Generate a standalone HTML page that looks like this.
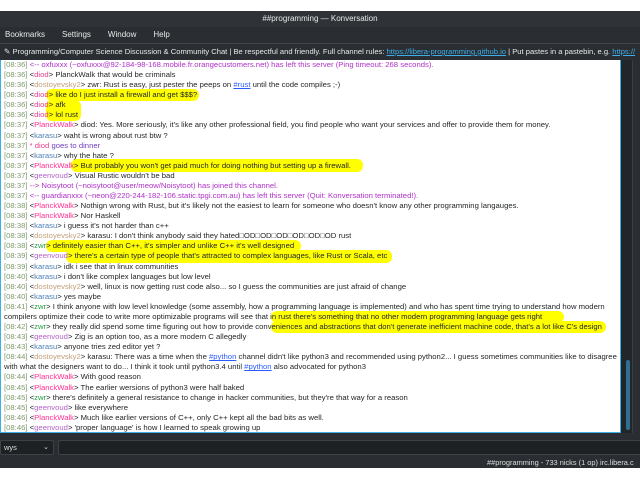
<!DOCTYPE html>
<html><head><meta charset="utf-8"><style>
*{margin:0;padding:0;box-sizing:border-box}
body{width:640px;height:480px;background:#fff;position:relative;overflow:hidden;font-family:"Liberation Sans","DejaVu Sans",sans-serif;}
.title{position:absolute;left:0;top:11px;width:640px;height:16px;background:#2f3337;color:#e8e8e8;font-size:8px;line-height:16px;text-align:center}
.menu{position:absolute;left:0;top:27px;width:640px;height:16px;background:#2a2e32;color:#e8e8e8;font-size:8px;line-height:16px;white-space:nowrap}
.menu span{margin-left:5px;margin-right:12px}
.topic{position:absolute;left:0;top:43px;width:640px;height:17px;background:#2a2e32;border-top:1px solid #41464b;color:#e8e8e8;font-size:7.6px;line-height:15px;white-space:nowrap;overflow:hidden;padding-left:4px}
.topic a{color:#3daee9;text-decoration:underline}
.chat{position:absolute;left:0;top:60px;width:621px;height:373px;background:#fff;border:1px solid #3daee9;border-top:none;overflow:hidden}
.lines{position:absolute;left:3px;top:0px;font-size:7.7px;color:#232629;white-space:nowrap;z-index:2}
.lines div{height:10.08px;line-height:10.08px}
.hl{position:absolute;background:#ffff00;border-radius:6px;z-index:1}
.t{color:#7f9a6f}.d{color:#e83c8c}.o{color:#c4a07a}.p{color:#ff2f92}.k{color:#4b7fb8}.g{color:#b463c8}.z{color:#26a245}.j{color:#b030c8}.l{color:#2b5cff;text-decoration:underline}
.sb{position:absolute;left:621px;top:60px;width:11px;height:373px;background:#232629}
.thumb{position:absolute;left:626px;top:360px;width:4px;height:70px;background:#2f6f94;border-radius:2px}
.rp{position:absolute;left:632px;top:60px;width:8px;height:373px;background:#2a2e32;border-left:1px solid #3a3f44}
.bottom{position:absolute;left:0;top:433px;width:640px;height:35px;background:#2a2e32}
.combo{position:absolute;left:0;top:440px;width:54px;height:15px;background:#1e2124;border:1px solid #3d4246;border-radius:2px;color:#ddd;font-size:7.5px;line-height:13px;padding-left:3px}
.combo b{position:absolute;right:4px;top:0;font-weight:normal;font-size:7px}
.input{position:absolute;left:58px;top:440px;width:590px;height:15px;background:#1e2124;border:1px solid #3d4246;border-radius:2px}
.status{position:absolute;left:487px;top:458px;color:#ddd;font-size:7.4px;line-height:10px;white-space:nowrap}
</style></head><body>
<div class="title">##programming — Konversation</div>
<div class="menu"><span>Bookmarks</span><span>Settings</span><span>Window</span><span>Help</span></div>
<div class="topic">✎ Programming/Computer Science Discussion &amp; Community Chat | Be respectful and friendly. Full channel rules: <a>https://libera-programming.github.io</a> | Put pastes in a pastebin, e.g. <a>https://</a></div>
<div class="chat">
<div class="hl" style="left:45px;top:29px;width:153px;height:12px"></div>
<div class="hl" style="left:45px;top:40px;width:35px;height:21px"></div>
<div class="hl" style="left:70px;top:99px;width:292px;height:13px"></div>
<div class="hl" style="left:45px;top:180px;width:255px;height:12px"></div>
<div class="hl" style="left:65px;top:190px;width:326px;height:13px"></div>
<div class="hl" style="left:270px;top:251px;width:293px;height:12px"></div>
<div class="hl" style="left:270px;top:261px;width:335px;height:12px"></div>
<div class="lines">
<div class="j"><span class="t">[08:36]</span> &lt;-- oxfuxxx (~oxfuxxx@92-184-98-168.mobile.fr.orangecustomers.net) has left this server (Ping timeout: 268 seconds).</div>
<div><span class="t">[08:36]</span> &lt;<span class="d">diod</span>&gt; PlanckWalk that would be criminals</div>
<div><span class="t">[08:36]</span> &lt;<span class="o">dostoyevsky2</span>&gt; zwr: Rust is easy, just pester the peeps on <span class="l">#rust</span> until the code compiles ;-)</div>
<div><span class="t">[08:36]</span> &lt;<span class="d">diod</span>&gt; like do I just install a firewall and get $$$?</div>
<div><span class="t">[08:36]</span> &lt;<span class="d">diod</span>&gt; afk</div>
<div><span class="t">[08:36]</span> &lt;<span class="d">diod</span>&gt; lol rust</div>
<div><span class="t">[08:37]</span> &lt;<span class="p">PlanckWalk</span>&gt; diod: Yes.  More seriously, it's like any other professional field, you find people who want your services and offer to provide them for money.</div>
<div><span class="t">[08:37]</span> &lt;<span class="k">karasu</span>&gt; waht is wrong about rust btw ?</div>
<div><span class="t">[08:37]</span> <span class="d">* diod</span> <span style="color:#7040c0">goes to dinner</span></div>
<div><span class="t">[08:37]</span> &lt;<span class="k">karasu</span>&gt; why the hate ?</div>
<div><span class="t">[08:37]</span> &lt;<span class="p">PlanckWalk</span>&gt; But probably you won't get paid much for doing nothing but setting up a firewall.</div>
<div><span class="t">[08:37]</span> &lt;<span class="g">geenvoud</span>&gt; Visual Rustic wouldn't be bad</div>
<div class="j"><span class="t">[08:37]</span> --&gt; Noisytoot (~noisytoot@user/meow/Noisytoot) has joined this channel.</div>
<div class="j"><span class="t">[08:37]</span> &lt;-- guardianxxx (~neon@220-244-182-106.static.tpgi.com.au) has left this server (Quit: Konversation terminated!).</div>
<div><span class="t">[08:38]</span> &lt;<span class="p">PlanckWalk</span>&gt; Nothign wrong with Rust, but it's likely not the easiest to learn for someone who doesn't know any other programming langauges.</div>
<div><span class="t">[08:38]</span> &lt;<span class="p">PlanckWalk</span>&gt; Nor Haskell</div>
<div><span class="t">[08:38]</span> &lt;<span class="k">karasu</span>&gt; i guess it's not harder than c++</div>
<div><span class="t">[08:38]</span> &lt;<span class="o">dostoyevsky2</span>&gt; karasu: I don't think anybody said they hated□OD□OD□OD□OD□OD□OD rust</div>
<div><span class="t">[08:38]</span> &lt;<span class="z">zwr</span>&gt; definitely easier than C++, it's simpler and unlike C++ it's well designed</div>
<div><span class="t">[08:39]</span> &lt;<span class="g">geenvoud</span>&gt; there's a certain type of people that's attracted to complex languages, like Rust or Scala, etc</div>
<div><span class="t">[08:39]</span> &lt;<span class="k">karasu</span>&gt; idk i see that in linux communities</div>
<div><span class="t">[08:40]</span> &lt;<span class="k">karasu</span>&gt; i don't like complex languages but low level</div>
<div><span class="t">[08:40]</span> &lt;<span class="o">dostoyevsky2</span>&gt; well, linux is now getting rust code also... so I guess the communities are just afraid of change</div>
<div><span class="t">[08:40]</span> &lt;<span class="k">karasu</span>&gt; yes maybe</div>
<div><span class="t">[08:41]</span> &lt;<span class="z">zwr</span>&gt; I think anyone with low level knowledge (some assembly, how a programming language is implemented) and who has spent time trying to understand how modern</div>
<div>compilers optimize their code to write more optimizable programs will see that in rust there's something that no other modern programming language gets right</div>
<div><span class="t">[08:42]</span> &lt;<span class="z">zwr</span>&gt; they really did spend some time figuring out how to provide conveniences and abstractions that don't generate inefficient machine code, that's a lot like C's design</div>
<div><span class="t">[08:43]</span> &lt;<span class="g">geenvoud</span>&gt; Zig is an option too, as a more modern C allegedly</div>
<div><span class="t">[08:43]</span> &lt;<span class="k">karasu</span>&gt; anyone tries zed editor yet ?</div>
<div><span class="t">[08:44]</span> &lt;<span class="o">dostoyevsky2</span>&gt; karasu: There was a time when the <span class="l">#python</span> channel didn't like python3 and recommended using python2... I guess sometimes communities like to disagree</div>
<div>with what the designers want to do... I think it took until python3.4 until <span class="l">#python</span> also advocated for python3</div>
<div><span class="t">[08:44]</span> &lt;<span class="p">PlanckWalk</span>&gt; With good reason</div>
<div><span class="t">[08:45]</span> &lt;<span class="p">PlanckWalk</span>&gt; The earlier wersions of python3 were half baked</div>
<div><span class="t">[08:45]</span> &lt;<span class="z">zwr</span>&gt; there's definitely a general resistance to change in hacker communities, but they're that way for a reason</div>
<div><span class="t">[08:45]</span> &lt;<span class="g">geenvoud</span>&gt; like everywhere</div>
<div><span class="t">[08:46]</span> &lt;<span class="p">PlanckWalk</span>&gt; Much like earlier versions of C++, only C++ kept all the bad bits as well.</div>
<div><span class="t">[08:46]</span> &lt;<span class="g">geenvoud</span>&gt; 'proper language' is how I learned to speak growing up</div>
</div>
</div>
<div class="sb"></div><div class="thumb"></div><div class="rp"></div>
<div class="bottom"></div>
<div class="combo">wys<b>⌄</b></div>
<div class="input"></div>
<div class="status">##programming - 733 nicks (1 op)  irc.libera.c</div>
</body></html>
